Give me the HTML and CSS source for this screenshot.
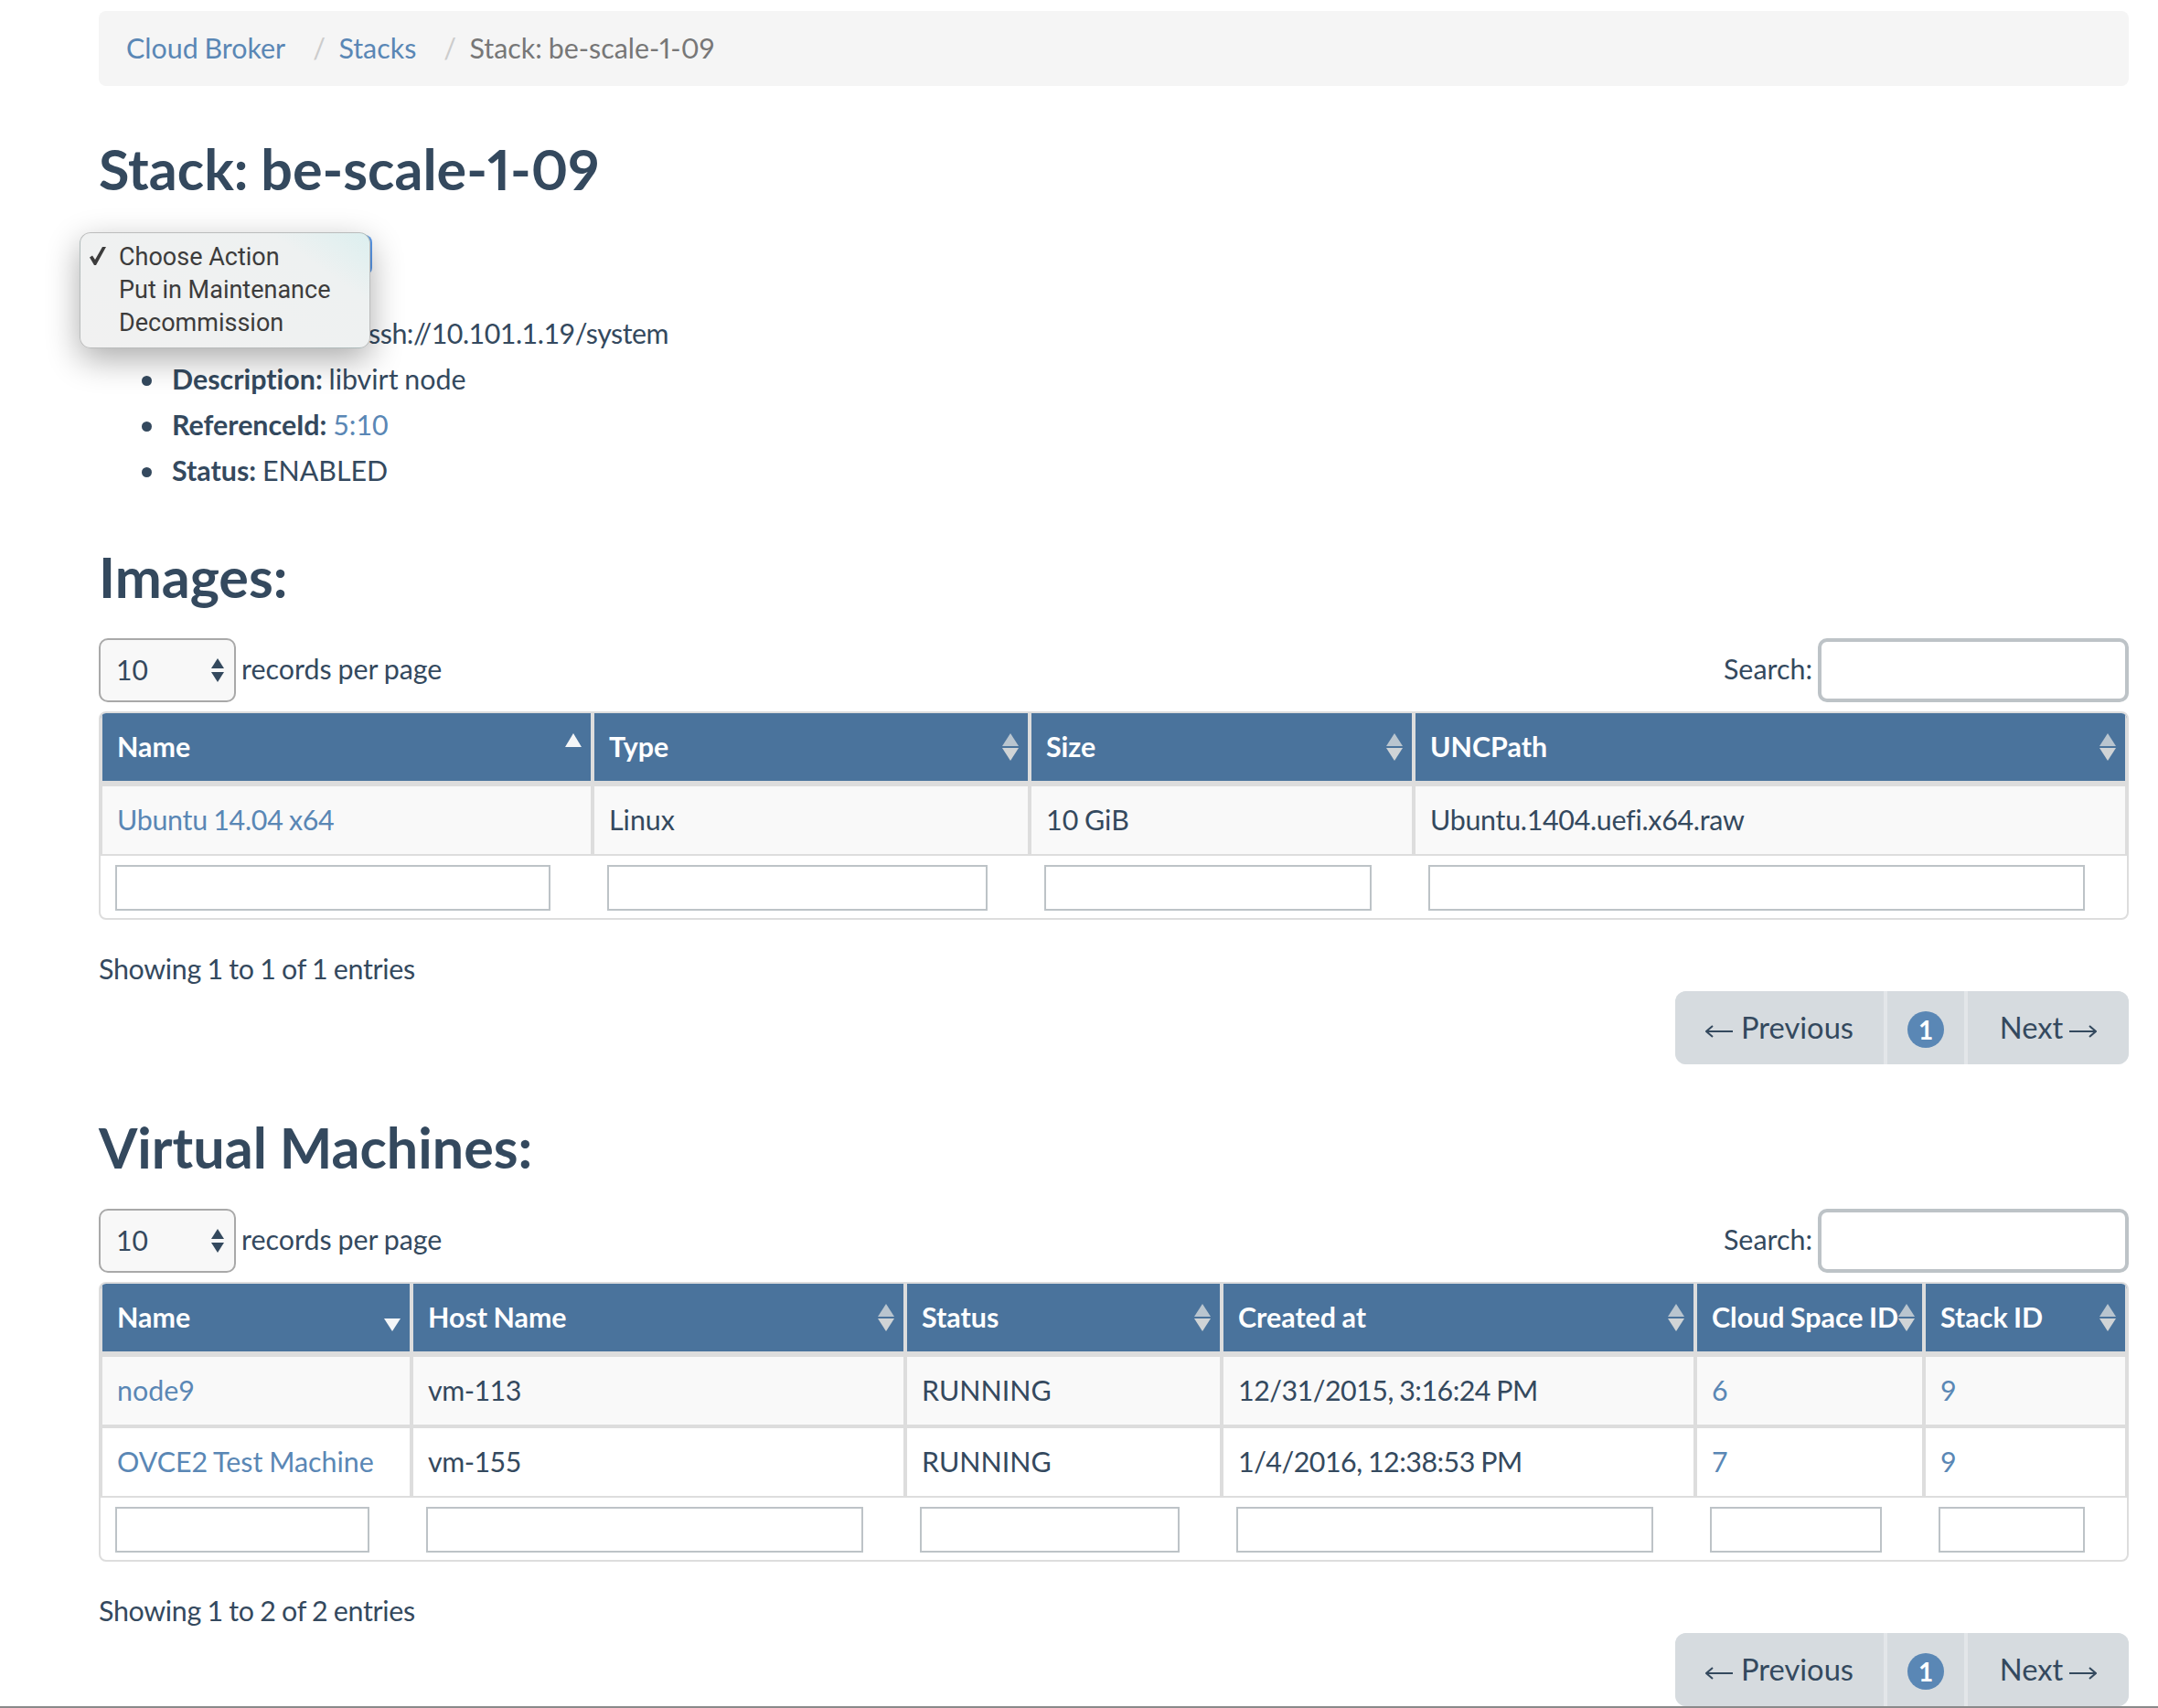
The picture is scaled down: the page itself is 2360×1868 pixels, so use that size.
FILE: index.html
```html
<!DOCTYPE html>
<html lang="en">
<head>
<meta charset="utf-8">
<title>Stack: be-scale-1-09</title>
<link rel="stylesheet" href="styles.css">
</head>
<body>
<div class="page">
  <ol class="breadcrumb">
    <li><a href="#">Cloud Broker</a></li>
    <li><a href="#">Stacks</a></li>
    <li class="current">Stack: be-scale-1-09</li>
  </ol>

  <h1 class="title">Stack: be-scale-1-09</h1>

  <div class="action">
    <div class="action-button"></div>
    <div class="action-menu">
      <div class="action-item"><svg class="check" viewBox="0 0 18 20"><path d="M0 11.5 3 9.5 6 14 14 0H18L7 20H5Z"/></svg>Choose Action</div>
      <div class="action-item">Put in Maintenance</div>
      <div class="action-item">Decommission</div>
    </div>
  </div>

  <ul class="facts">
    <li><b>Api URL:</b> <span class="num">qemu+ssh://10.101.1.19/system</span></li>
    <li><b>Description:</b> libvirt node</li>
    <li><b>ReferenceId:</b> <a href="#">5:10</a></li>
    <li><b>Status:</b> ENABLED</li>
  </ul>

  <section class="block">
    <h2 class="title">Images:</h2>
    <div class="controls">
      <div class="length">
        <div class="select-box">
          <select class="select"><option>10</option></select>
          <svg class="select-arrows" viewBox="0 0 14 26"><path d="M7 0 14 11H0Z"/><path d="M0 15H14L7 26Z"/></svg>
        </div>
        <span class="length-label">records per page</span>
      </div>
      <label class="search"><span class="search-label">Search:</span><input class="search-input" type="text"></label>
    </div>
    <div class="table-wrap">
      <table class="grid grid-images">
        <colgroup><col class="w538"><col class="w478"><col class="w420"><col class="w780"></colgroup>
        <thead>
          <tr>
            <th><div class="th"><span>Name</span><svg class="sort" viewBox="0 0 18 30"><path class="on" d="M9 0 18 15H0Z"/></svg></div></th>
            <th><div class="th"><span>Type</span><svg class="sort" viewBox="0 0 18 30"><path class="up" d="M9 0 18 14H0Z"/><path class="down" d="M0 16H18L9 30Z"/></svg></div></th>
            <th><div class="th"><span>Size</span><svg class="sort" viewBox="0 0 18 30"><path class="up" d="M9 0 18 14H0Z"/><path class="down" d="M0 16H18L9 30Z"/></svg></div></th>
            <th><div class="th"><span>UNCPath</span><svg class="sort" viewBox="0 0 18 30"><path class="up" d="M9 0 18 14H0Z"/><path class="down" d="M0 16H18L9 30Z"/></svg></div></th>
          </tr>
        </thead>
        <tbody>
          <tr class="odd"><td><a class="num-soft" href="#">Ubuntu 14.04 x64</a></td><td>Linux</td><td>10 GiB</td><td class="num-soft">Ubuntu.1404.uefi.x64.raw</td></tr>
        </tbody>
        <tfoot>
          <tr><td><input class="filter" type="text"></td><td><input class="filter" type="text"></td><td><input class="filter" type="text"></td><td><input class="filter" type="text"></td></tr>
        </tfoot>
      </table>
    </div>
    <p class="info num-soft">Showing 1 to 1 of 1 entries</p>
    <nav class="pager">
      <a class="pager-item pager-prev" href="#"><svg class="arrow" viewBox="0 0 30 14"><path d="M1 7H30M8 1 1 7 8 13"/></svg>Previous</a>
      <a class="pager-item pager-num" href="#"><span class="badge">1</span></a>
      <a class="pager-item pager-next" href="#">Next<svg class="arrow" viewBox="0 0 30 14"><path d="M0 7H29M22 1 29 7 22 13"/></svg></a>
    </nav>
  </section>

  <section class="block">
    <h2 class="title">Virtual Machines:</h2>
    <div class="controls">
      <div class="length">
        <div class="select-box">
          <select class="select"><option>10</option></select>
          <svg class="select-arrows" viewBox="0 0 14 26"><path d="M7 0 14 11H0Z"/><path d="M0 15H14L7 26Z"/></svg>
        </div>
        <span class="length-label">records per page</span>
      </div>
      <label class="search"><span class="search-label">Search:</span><input class="search-input" type="text"></label>
    </div>
    <div class="table-wrap">
      <table class="grid grid-vms">
        <colgroup><col class="w340"><col class="w540"><col class="w346"><col class="w518"><col class="w250"><col class="w222"></colgroup>
        <thead>
          <tr>
            <th><div class="th"><span>Name</span><svg class="sort" viewBox="0 0 18 30"><path class="on" d="M0 16H18L9 30Z"/></svg></div></th>
            <th><div class="th"><span>Host Name</span><svg class="sort" viewBox="0 0 18 30"><path class="up" d="M9 0 18 14H0Z"/><path class="down" d="M0 16H18L9 30Z"/></svg></div></th>
            <th><div class="th"><span>Status</span><svg class="sort" viewBox="0 0 18 30"><path class="up" d="M9 0 18 14H0Z"/><path class="down" d="M0 16H18L9 30Z"/></svg></div></th>
            <th><div class="th"><span>Created at</span><svg class="sort" viewBox="0 0 18 30"><path class="up" d="M9 0 18 14H0Z"/><path class="down" d="M0 16H18L9 30Z"/></svg></div></th>
            <th><div class="th"><span>Cloud Space ID</span><svg class="sort" viewBox="0 0 18 30"><path class="up" d="M9 0 18 14H0Z"/><path class="down" d="M0 16H18L9 30Z"/></svg></div></th>
            <th><div class="th"><span>Stack ID</span><svg class="sort" viewBox="0 0 18 30"><path class="up" d="M9 0 18 14H0Z"/><path class="down" d="M0 16H18L9 30Z"/></svg></div></th>
          </tr>
        </thead>
        <tbody>
          <tr class="odd"><td><a href="#">node9</a></td><td class="num">vm-113</td><td>RUNNING</td><td class="num">12/31/2015, 3:16:24 PM</td><td><a href="#">6</a></td><td><a href="#">9</a></td></tr>
          <tr><td><a href="#">OVCE2 Test Machine</a></td><td class="num">vm-155</td><td>RUNNING</td><td class="num">1/4/2016, 12:38:53 PM</td><td><a href="#">7</a></td><td><a href="#">9</a></td></tr>
        </tbody>
        <tfoot>
          <tr><td><input class="filter" type="text"></td><td><input class="filter" type="text"></td><td><input class="filter" type="text"></td><td><input class="filter" type="text"></td><td><input class="filter" type="text"></td><td><input class="filter" type="text"></td></tr>
        </tfoot>
      </table>
    </div>
    <p class="info num-soft">Showing 1 to 2 of 2 entries</p>
    <nav class="pager">
      <a class="pager-item pager-prev" href="#"><svg class="arrow" viewBox="0 0 30 14"><path d="M1 7H30M8 1 1 7 8 13"/></svg>Previous</a>
      <a class="pager-item pager-num" href="#"><span class="badge">1</span></a>
      <a class="pager-item pager-next" href="#">Next<svg class="arrow" viewBox="0 0 30 14"><path d="M0 7H29M22 1 29 7 22 13"/></svg></a>
    </nav>
  </section>
</div>
</body>
</html>
```
FILE: styles.css
```css
* { box-sizing: border-box; }
html, body { margin: 0; padding: 0; background: #fff; }
body {
  font-family: Lato, "Liberation Sans", sans-serif;
  font-size: 30.4px;
  line-height: 50px;
  color: #34495e;
  word-spacing: -1px;
  font-variant-ligatures: none;
}
a { color: #5a87b5; text-decoration: none; }
.num { letter-spacing: -.5px; }
.num-soft { letter-spacing: -.3px; }

.page {
  height: 1868px;
  overflow: hidden;
  padding: 12px 32px 0 108px;
  border-bottom: 2px solid #8a8a8a;
}

.breadcrumb {
  display: flex;
  align-items: center;
  height: 82px;
  margin: 0;
  padding: 0 30px 2px;
  list-style: none;
  background: #f5f5f5;
  border-radius: 8px;
  font-variant-numeric: proportional-nums;
}
.breadcrumb li + li::before {
  content: "/";
  color: #ccc;
  padding: 0 14.5px 0 30px;
}
.breadcrumb .current { color: #777; }

.title {
  margin: 0;
  font-size: 61px;
  line-height: 66px;
  font-weight: 700;
  color: #34495e;
  font-variant-numeric: proportional-nums;
}
h1.title { margin-top: 58px; }
h2.title { margin-bottom: 34px; }

.action { position: relative; height: 44px; margin-top: 39px; }
.action-button {
  width: 299px;
  height: 44px;
  background: #5c9bec;
  border-radius: 8px;
}
.action-menu {
  position: absolute;
  left: -21px;
  top: -3px;
  width: 318px;
  height: 127px;
  padding: 8px 0 0 42px;
  background: linear-gradient(215deg, #dcefef 0, #eef1f1 22%, #f1f1f1 100%);
  border: 1px solid rgba(0, 0, 0, .22);
  border-radius: 12px;
  box-shadow: 0 12px 36px rgba(0, 0, 0, .33);
  font-family: Roboto, "Liberation Sans", sans-serif;
  font-size: 27px;
  line-height: 36px;
  word-spacing: 0;
  color: #3c3c3c;
}
.action-item { position: relative; white-space: nowrap; }
.check {
  position: absolute;
  left: -32px;
  top: 7px;
  width: 18px;
  height: 20px;
  fill: #3c3c3c;
}

.facts { margin: 38px 0 0; padding: 0 0 1px 80px; list-style: none; }
.facts li::before {
  content: "";
  display: inline-block;
  width: 11px;
  height: 11px;
  margin: 0 22px 3px -33px;
  vertical-align: middle;
  border-radius: 50%;
  background: #34495e;
}
.facts b { font-weight: 700; }

.block { margin-top: 58px; }

.controls {
  display: flex;
  justify-content: space-between;
  align-items: center;
  height: 70px;
}
.length { display: flex; align-items: center; gap: 6px; }
.length-label, .search-label { padding-bottom: 5px; }
.select-box { position: relative; width: 150px; height: 70px; }
.select {
  appearance: none;
  display: block;
  width: 100%;
  height: 100%;
  padding: 0 0 2px 17px;
  font: 30px Lato, sans-serif;
  color: #34495e;
  background: #f8f8f8;
  border: 2px solid #a9a9a9;
  border-radius: 10px;
}
.select-arrows {
  position: absolute;
  right: 13px;
  top: 22px;
  width: 14px;
  height: 26px;
  fill: #34495e;
}
.search { display: flex; align-items: center; gap: 6px; }
.search-input {
  width: 340px;
  height: 70px;
  background: #fff;
  border: 4px solid #bdc3c7;
  border-radius: 10px;
}

.table-wrap {
  margin-top: 10px;
  border: 2px solid #dddddd;
  border-radius: 8px;
  overflow: hidden;
}
.grid {
  width: 100%;
  table-layout: fixed;
  border-collapse: separate;
  border-spacing: 0;
}
.w538 { width: 538px; } .w478 { width: 478px; } .w420 { width: 420px; } .w780 { width: 780px; }
.w340 { width: 340px; } .w540 { width: 540px; } .w346 { width: 346px; } .w518 { width: 518px; }
.w250 { width: 250px; } .w222 { width: 222px; }

.grid th {
  height: 80px;
  padding: 0 10px 0 16px;
  text-align: left;
  white-space: nowrap;
  color: #fff;
  font-weight: 700;
  background: #4a739c;
  border-left: 2px solid #dddddd;
  border-right: 2px solid #dddddd;
  border-bottom: 6px solid #dddddd;
}
.th { display: flex; align-items: center; justify-content: space-between; }
.th span { padding-bottom: 2px; }
.sort { flex: none; width: 18px; height: 30px; }
.sort .up { fill: #b9c5cf; }
.sort .down { fill: #d0d4d6; }
.sort .on { fill: #f4f6f8; }

.grid tbody td {
  height: 76px;
  padding: 0 16px 2px;
  background: #fff;
  border-left: 2px solid #dddddd;
  border-right: 2px solid #dddddd;
  border-bottom: 2px solid #dddddd;
}
.grid tbody tr + tr td { height: 78px; border-top: 2px solid #dddddd; }
.grid tbody tr.odd td { background: #f9f9f9; }

.grid tfoot td { height: 68px; padding: 2px 46px 0 16px; }
.filter {
  display: block;
  width: 100%;
  height: 50px;
  padding: 0;
  background: #fff;
  border: 2px solid #bdc3c7;
  border-radius: 0;
}

.info { margin: 30px 0 0; padding-bottom: 2px; line-height: 46px; }

.pager {
  display: flex;
  width: 496px;
  height: 80px;
  margin: 0 0 0 auto;
  background: #e3e6e9;
  border-radius: 12px;
}
.pager-item {
  display: flex;
  align-items: center;
  justify-content: center;
  height: 80px;
  color: #34495e;
  background: #d6dbdf;
  font-size: 32.7px;
}
.pager-prev { width: 228px; gap: 9px; border-radius: 12px 0 0 12px; }
.pager-num { width: 84px; margin: 0 4px; }
.pager-next { width: 176px; gap: 7px; border-radius: 0 12px 12px 0; }
.arrow {
  flex: none;
  width: 30px;
  height: 14px;
  margin-top: 8px;
  fill: none;
  stroke: #34495e;
  stroke-width: 2;
}
.badge {
  display: flex;
  align-items: center;
  justify-content: center;
  width: 40px;
  height: 40px;
  margin-top: 4px;
  border-radius: 50%;
  background: #5a87b5;
  color: #fff;
  font-size: 28px;
  font-weight: 700;
}
```
